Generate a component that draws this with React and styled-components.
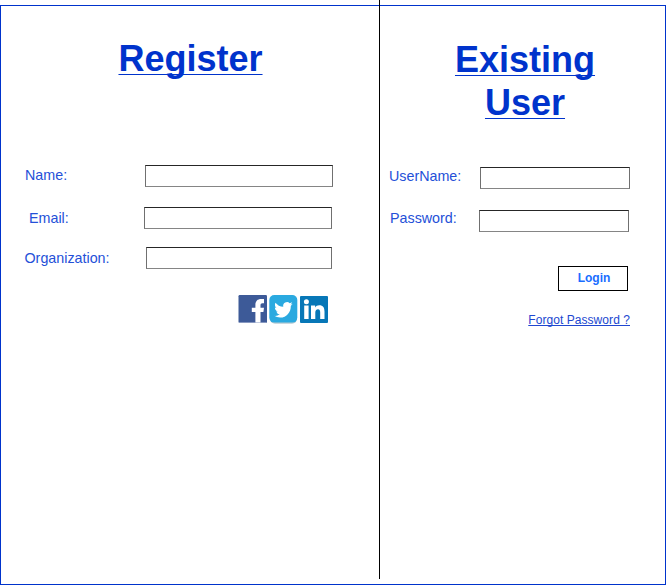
import React from "react";
import styled, { createGlobalStyle } from "styled-components";

const GlobalStyle = createGlobalStyle`
  *, *::before, *::after { box-sizing: border-box; }
  body {
    margin: 0;
    background: #fff;
    font-family: "Liberation Sans", Arial, sans-serif;
  }
`;

const Page = styled.div`
  height: 587px;
  padding-top: 5px;
  overflow: hidden;
`;

const Frame = styled.main`
  display: grid;
  grid-template-columns: 378px 1px 1fr;
  width: 666px;
  height: 580px;
  border: 1px solid #0033cc;
`;

const Divider = styled.div`
  height: 579px;
  margin-top: -6px;
  background: #000;
`;

const Panel = styled.section`
  display: flex;
  flex-direction: column;
`;

const Title = styled.h1`
  height: ${(p) => p.$height}px;
  margin: 0;
  padding: ${(p) => p.$padding};
  color: #0033cc;
  font-size: 36px;
  line-height: 43px;
  font-weight: 700;
  text-align: center;
  text-decoration: underline;
  text-decoration-thickness: 1px;
  text-underline-offset: 3px;
  text-decoration-skip-ink: none;
`;

const Field = styled.label`
  display: flex;
  height: 22px;
  margin-bottom: ${(p) => p.$gap}px;
  padding-left: ${(p) => p.$indent}px;
`;

const FieldLabel = styled.span`
  width: ${(p) => p.$width}px;
  flex: none;
  color: #2450d8;
  font-size: 14.3px;
  line-height: ${(p) => p.$line}px;
  white-space: nowrap;
`;

const Input = styled.input`
  width: ${(p) => p.$width}px;
  height: 22px;
  padding: 0 4px;
  border: 1px solid;
  border-color: #262626 #707070 #858585 #707070;
  border-radius: 0;
  background: #fff;
  font: 14px "Liberation Sans", Arial, sans-serif;
  outline: none;
`;

const SocialLinks = styled.div`
  display: flex;
  gap: 2px;
  padding-left: 237px;

  svg { display: block; }
`;

const LoginButton = styled.button`
  align-self: flex-end;
  width: 70px;
  height: 25px;
  margin-right: 37px;
  padding: 0 0 1px 2px;
  border: 1px solid #000;
  background: #fff;
  color: #1a6dff;
  font: 700 12px/22px "Liberation Sans", Arial, sans-serif;
`;

const ForgotLink = styled.a`
  align-self: flex-end;
  margin: 22px 35px 0 0;
  color: #2047d0;
  font-size: 12px;
  line-height: 14px;
  letter-spacing: 0.06px;
  text-decoration: underline;
  text-decoration-skip-ink: none;
`;

const FacebookIcon = () => (
  <svg width="29" height="29" viewBox="0 0 29 29" aria-label="Facebook">
    <rect x=".5" width="28.5" height="28" rx="1.2" fill="#3d5a98" />
    <path d="M1 27.5h27" stroke="#8798c0" />
    <path fill="#fff" d="M17.4 27.5V17H13.8v-4.2h3.6V10c0-3.9 2.2-6 5.8-6H26v4.2h-1.6c-1.4 0-1.9.7-1.9 2v2.6H26l-.6 4.2h-2.9v10.5z" />
  </svg>
);

const TwitterIcon = () => (
  <svg width="29" height="29" viewBox="0 0 29 29" aria-label="Twitter">
    <rect x="1" y="1.4" width="27" height="27.4" rx="5" fill="#b9cbd3" />
    <rect x=".3" width="28" height="27.6" rx="5" fill="#2aa9e0" />
    <path fill="#fff" transform="translate(5.2 5.2) scale(.77 .8)" d="M23.95 4.57a10 10 0 0 1-2.82.77 4.96 4.96 0 0 0 2.16-2.72c-.95.55-2 .95-3.13 1.18a4.92 4.92 0 0 0-8.38 4.48C7.69 8.1 4.07 6.13 1.64 3.16a4.82 4.82 0 0 0-.67 2.48c0 1.71.87 3.21 2.19 4.1a4.9 4.9 0 0 1-2.23-.62v.06a4.92 4.92 0 0 0 3.95 4.83 5 5 0 0 1-2.21.08 4.94 4.94 0 0 0 4.6 3.42A9.87 9.87 0 0 1 0 19.54a14 14 0 0 0 7.55 2.21c9.05 0 14-7.5 14-13.98 0-.21 0-.42-.02-.63a9.94 9.94 0 0 0 2.42-2.57z" />
  </svg>
);

const LinkedinIcon = () => (
  <svg width="29" height="29" viewBox="0 0 29 29" aria-label="LinkedIn">
    <rect y="1" width="28" height="27" rx="1" fill="#0777b7" />
    <circle cx="6.4" cy="6.8" r="2.5" fill="#fff" />
    <path fill="#fff" d="M4.2 10.6h4.4V24H4.2zM11 10.6h4.1v1.9c.8-1.4 2.3-2.2 4.1-2.2 4 0 5.3 2.4 5.3 6.3V24h-4.3v-6.5c0-1.9-.4-3.2-2.2-3.2s-2.7 1.4-2.7 3.3V24H11z" />
  </svg>
);

export default function App() {
  return (
    <>
      <GlobalStyle />
      <Page>
        <Frame>
          <Panel>
            <Title $height={159} $padding="31px 0 0 1px">Register</Title>
            <Field $indent={24} $gap={20}>
              <FieldLabel $width={120} $line={20}>Name:</FieldLabel>
              <Input $width={188} />
            </Field>
            <Field $indent={28} $gap={18}>
              <FieldLabel $width={115} $line={22}>Email:</FieldLabel>
              <Input $width={188} />
            </Field>
            <Field $indent={23.5} $gap={26}>
              <FieldLabel $width={121.5} $line={22}>Organization:</FieldLabel>
              <Input $width={186} />
            </Field>
            <SocialLinks>
              <FacebookIcon />
              <TwitterIcon />
              <LinkedinIcon />
            </SocialLinks>
          </Panel>
          <Divider />
          <Panel>
            <Title $height={161} $padding="32px 62px 0 67px">Existing User</Title>
            <Field $indent={9} $gap={21}>
              <FieldLabel $width={91} $line={18}>UserName:</FieldLabel>
              <Input $width={150} />
            </Field>
            <Field $indent={10} $gap={34}>
              <FieldLabel $width={89} $line={16}>Password:</FieldLabel>
              <Input type="password" $width={150} />
            </Field>
            <LoginButton>Login</LoginButton>
            <ForgotLink href="#">Forgot Password ?</ForgotLink>
          </Panel>
        </Frame>
      </Page>
    </>
  );
}
